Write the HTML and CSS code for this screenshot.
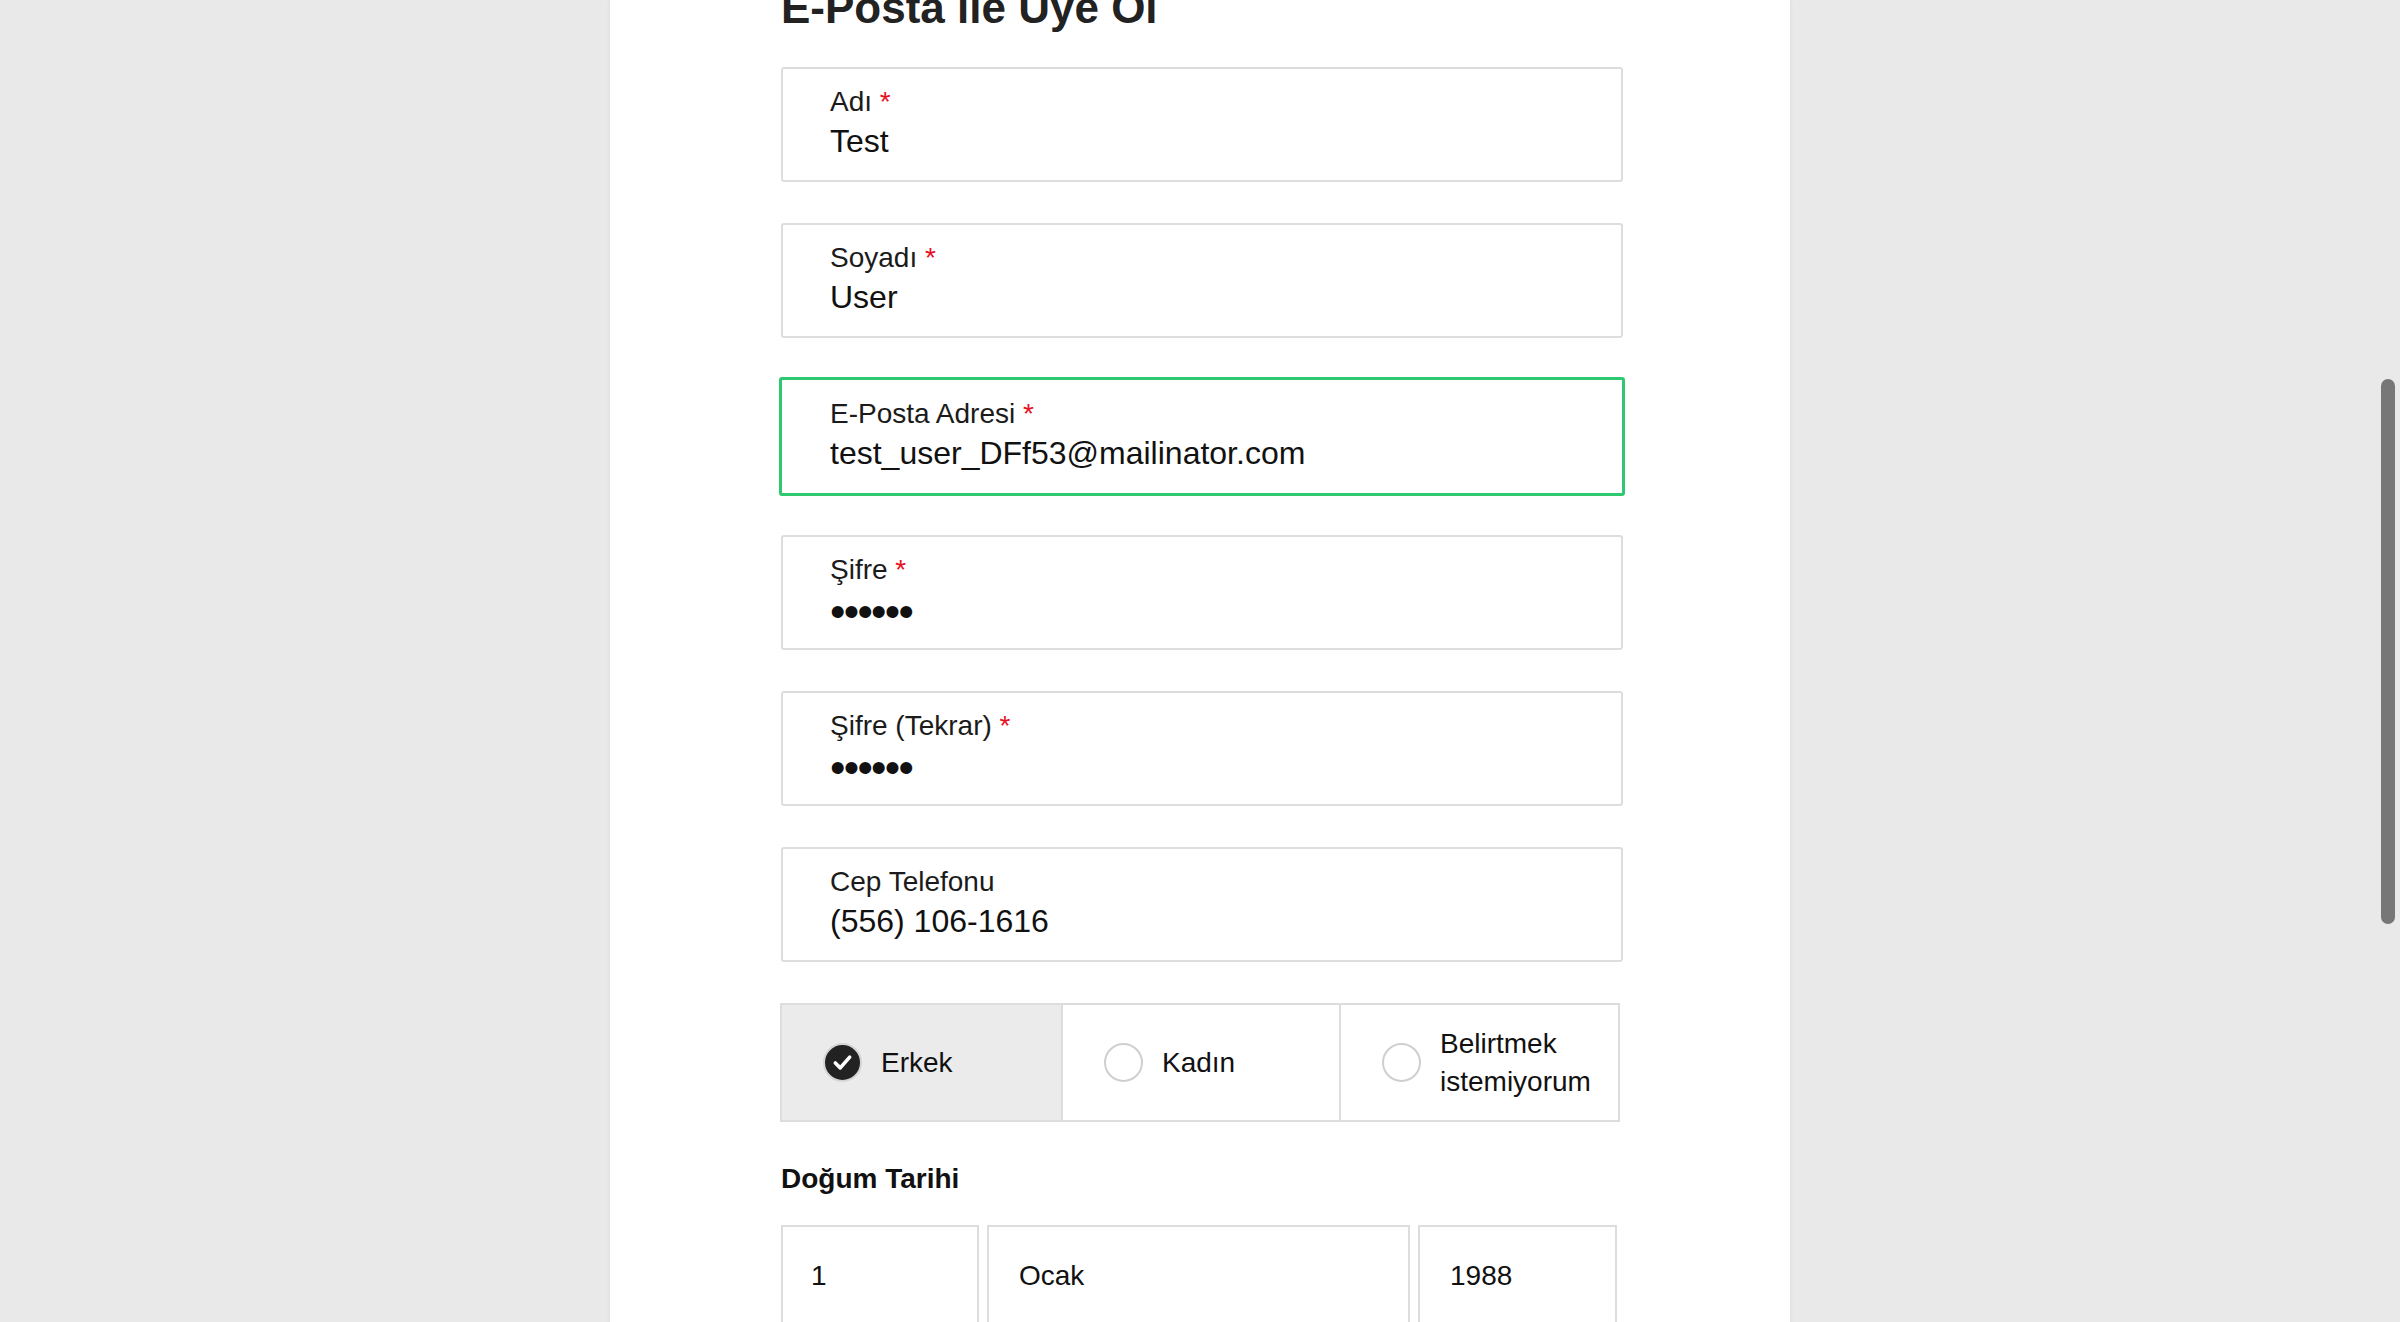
FILE: index.html
```html
<!DOCTYPE html>
<html lang="tr">
<head>
<meta charset="utf-8">
<title>E-Posta ile Üye Ol</title>
<link rel="stylesheet" href="styles.css">
</head>
<body>
<div class="page">
  <main class="panel">
    <h1 class="title">E-Posta ile Üye Ol</h1>

    <div class="field">
      <div class="label">Adı <span class="req">*</span></div>
      <div class="value">Test</div>
    </div>

    <div class="field">
      <div class="label">Soyadı <span class="req">*</span></div>
      <div class="value">User</div>
    </div>

    <div class="field focused">
      <div class="label">E-Posta Adresi <span class="req">*</span></div>
      <div class="value">test_user_DFf53@mailinator.com</div>
    </div>

    <div class="field">
      <div class="label">Şifre <span class="req">*</span></div>
      <div class="value dots">••••••</div>
    </div>

    <div class="field">
      <div class="label">Şifre (Tekrar) <span class="req">*</span></div>
      <div class="value dots">••••••</div>
    </div>

    <div class="field">
      <div class="label">Cep Telefonu</div>
      <div class="value">(556) 106-1616</div>
    </div>

    <div class="gender">
      <div class="opt selected">
        <span class="radio checked">
          <svg viewBox="0 0 39 39" width="35" height="35"><polyline points="11.5,20 17,25.5 27.5,13.5" fill="none" stroke="#fff" stroke-width="4" stroke-linecap="round" stroke-linejoin="round"/></svg>
        </span>
        <span class="opt-text">Erkek</span>
      </div>
      <div class="opt">
        <span class="radio"></span>
        <span class="opt-text">Kadın</span>
      </div>
      <div class="opt">
        <span class="radio"></span>
        <span class="opt-text">Belirtmek istemiyorum</span>
      </div>
    </div>

    <div class="dob-label">Doğum Tarihi</div>
    <div class="dob">
      <div class="dob-box">1</div>
      <div class="dob-box">Ocak</div>
      <div class="dob-box">1988</div>
    </div>
  </main>
  <div class="scrollbar"><div class="thumb"></div></div>
</div>
</body>
</html>
```

FILE: styles.css
```css
html, body {
  margin: 0;
  padding: 0;
}

body {
  background: #e9e9e9;
  font-family: "Liberation Sans", Arial, Helvetica, sans-serif;
  color: #1b1b1b;
  height: 1322px;
  overflow: hidden;
}

.page {
  position: relative;
  height: 1322px;
}

.panel {
  box-sizing: border-box;
  width: 1180px;
  min-height: 1322px;
  margin: 0 auto;
  background: #fff;
  padding: 0 167px 0 171px;
  box-shadow: 0 0 4px rgba(0, 0, 0, 0.07);
  overflow: hidden;
}

.title {
  margin: -14px 0 37px;
  font-size: 44px;
  line-height: 44px;
  font-weight: 700;
  color: #222;
}

.field {
  box-sizing: border-box;
  height: 115px;
  border: 2px solid #dddddd;
  border-radius: 3px;
  padding: 16px 47px 0;
  margin-bottom: 41px;
}

.field.focused {
  height: 119px;
  border: 3px solid #2dc86f;
  margin: -2px -2px 39px -2px;
  padding: 17px 48px 0;
}

.label {
  font-size: 28px;
  line-height: 34px;
  color: #1b1b1b;
}

.req {
  color: #e8101f;
}

.value {
  font-size: 32px;
  line-height: 44px;
  color: #111;
}

.value.dots {
  font-size: 44px;
  line-height: 44px;
  letter-spacing: -1.7px;
  padding-top: 3px;
}

.gender {
  box-sizing: border-box;
  display: grid;
  grid-template-columns: 279px 278px 1fr;
  width: 840px;
  height: 119px;
  border: 2px solid #dddddd;
  margin: 40px 0 0 -1px;
}

.opt {
  display: flex;
  align-items: center;
  gap: 19px;
  padding: 0 12px 0 41px;
  border-left: 2px solid #dddddd;
  font-size: 28px;
  line-height: 38px;
  color: #111;
}

.opt:first-child {
  border-left: none;
}

.opt.selected {
  background: #ebebeb;
}

.radio {
  box-sizing: border-box;
  flex: 0 0 39px;
  width: 39px;
  height: 39px;
  border: 2px solid #cfcfcf;
  border-radius: 50%;
  background: #fff;
  display: flex;
  align-items: center;
  justify-content: center;
}

.radio.checked {
  background: #222;
  border-color: #d4d4d4;
}

.dob-label {
  margin-top: 38px;
  font-size: 28px;
  line-height: 38px;
  font-weight: 700;
  color: #111;
}

.dob {
  display: grid;
  grid-template-columns: 198px 423px 199px;
  gap: 8px;
  margin-top: 27px;
}

.dob-box {
  box-sizing: border-box;
  border: 2px solid #dddddd;
  padding: 30px 30px;
  font-size: 28px;
  line-height: 38px;
  height: 140px;
  color: #111;
}

.dob-box:first-child {
  padding-left: 28px;
}

.scrollbar {
  position: absolute;
  top: 0;
  right: 0;
  width: 19px;
  height: 1322px;
}

.thumb {
  position: absolute;
  top: 379px;
  left: 0;
  width: 14px;
  height: 545px;
  border-radius: 7px;
  background: #777;
}
```
